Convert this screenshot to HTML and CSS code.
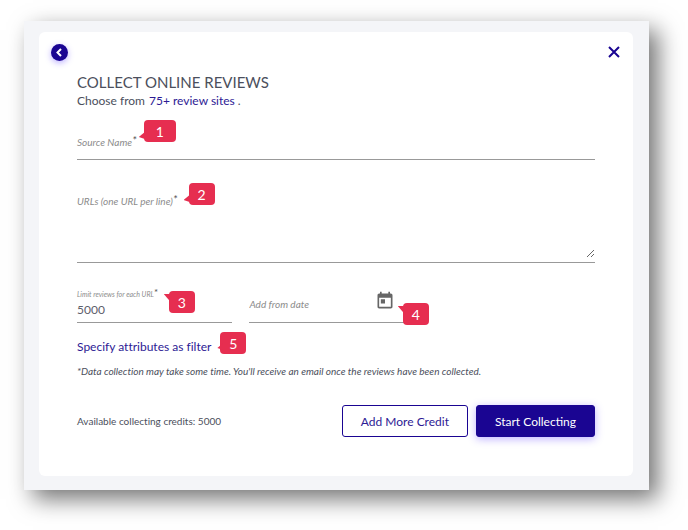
FILE: index.html
```html
<!DOCTYPE html>
<html lang="en">
<head>
    <meta charset="UTF-8">
    <meta name="viewport" content="width=device-width, initial-scale=1.0">
    <title>Collect Online Reviews</title>
    <link rel="stylesheet" href="styles.css">
</head>
<body>
    <div class="frame">
        <main class="card">
            <div class="card-nav">
                <button type="button" class="back-btn" aria-label="Back">
                    <svg width="17" height="17" viewBox="0 0 17 17"><path d="M10 5L6.5 8.5L10 12" fill="none" stroke="#fff" stroke-width="2"></path></svg>
                </button>
                <button type="button" class="close-btn" aria-label="Close">
                    <svg width="12" height="12" viewBox="0 0 12 12"><path d="M1 1L11 11M11 1L1 11" fill="none" stroke="#1a0592" stroke-width="2"></path></svg>
                </button>
            </div>

            <form class="content">
                <h1>COLLECT ONLINE REVIEWS</h1>
                <p class="subtitle">Choose from <a href="#sites">75+ review sites</a> .</p>

                <div class="field field-name">
                    <div class="label-row">
                        <label for="sourceName">Source Name<span class="req">*</span></label>
                        <span class="callout callout-1">1</span>
                    </div>
                    <input type="text" id="sourceName">
                </div>

                <div class="field field-urls">
                    <div class="label-row">
                        <label for="urls">URLs (one URL per line)<span class="req">*</span></label>
                        <span class="callout callout-2">2</span>
                    </div>
                    <textarea id="urls"></textarea>
                </div>

                <div class="field-row">
                    <div class="field field-limit">
                        <div class="label-row">
                            <label for="limit">Limit reviews for each URL<span class="req">*</span></label>
                            <span class="callout callout-3 tail-top">3</span>
                        </div>
                        <input type="text" id="limit" value="5000">
                    </div>
                    <div class="field field-date">
                        <input type="text" placeholder="Add from date" aria-label="Add from date">
                        <button type="button" class="date-btn" aria-label="Open calendar">
                            <svg width="20" height="20" viewBox="0 0 24 24" fill="#666"><path d="M19 3h-1V1h-2v2H8V1H6v2H5c-1.11 0-1.99.9-1.99 2L3 19c0 1.1.89 2 2 2h14c1.1 0 2-.9 2-2V5c0-1.1-.9-2-2-2zm0 16H5V8h14v11zM7 10h5v5H7z"></path></svg>
                        </button>
                        <span class="callout callout-4 tail-top">4</span>
                    </div>
                </div>

                <div class="filter-row">
                    <a href="#filter">Specify attributes as filter</a>
                    <span class="callout callout-5 tail-mid">5</span>
                </div>
                <p class="note">*Data collection may take some time. You'll receive an email once the reviews have been collected.</p>

                <div class="actions">
                    <span class="credits">Available collecting credits: 5000</span>
                    <button type="button" class="btn btn-outline">Add More Credit</button>
                    <button type="submit" class="btn btn-primary">Start Collecting</button>
                </div>
            </form>
        </main>
    </div>
</body>
</html>
```
FILE: styles.css
```css
* {
    box-sizing: border-box;
}
body {
    margin: 0;
    padding: 21px 39px 40px 24px;
    background-color: #fff;
    color: #4b4f5c;
    font-family: 'Lato', sans-serif;
    font-size: 12px;
    font-variant-ligatures: none;
    line-height: 18px;
}
.frame {
    padding: 11px 16px 14px 15px;
    background-color: #f4f5f8;
    box-shadow: 9px 9px 22px rgba(0, 0, 0, 0.55);
}
.card {
    padding: 10px 13px 39px 12px;
    border-radius: 6px;
    background-color: #fff;
}
.card-nav {
    display: flex;
    justify-content: space-between;
    align-items: center;
    height: 20px;
}
.card-nav button,
.date-btn {
    display: flex;
    padding: 0;
    border: none;
    background: none;
    cursor: pointer;
}
.card-nav .back-btn {
    border-radius: 50%;
    background-color: #1a0592;
    box-shadow: 0 2px 6px rgba(90, 60, 255, 0.4);
}
.content {
    padding: 10px 25px 0 26px;
}
h1 {
    margin: 0;
    font-size: 15px;
    font-weight: 400;
    line-height: 20px;
}
p {
    margin: 0;
}
a {
    color: #2d1a94;
    text-decoration: none;
}
.subtitle a {
    margin-left: 1px;
}

/* form fields */
.field {
    border-bottom: 1px solid #999;
}
.label-row {
    position: relative;
    display: flex;
    width: max-content;
}
label {
    color: #8c8c8c;
    font-size: 10px;
    font-style: italic;
}
.req {
    color: #555;
    font-size: 12px;
    line-height: 1;
    vertical-align: 1px;
}
input,
textarea {
    display: block;
    width: 100%;
    padding: 0;
    border: none;
    outline: none;
    background: none;
    color: #5c606b;
    font-family: inherit;
    font-size: 12px;
}
.field-name {
    margin-top: 23px;
}
.field-name input {
    height: 8px;
}
.field-urls {
    margin-top: 32px;
    padding-bottom: 4px;
}
.field-urls textarea {
    height: 48px;
    resize: vertical;
}
.field-row {
    display: grid;
    grid-template-columns: 30% 30%;
    gap: 17px;
    margin-top: 24px;
}
.field-limit label {
    font-size: 7px;
    line-height: 12px;
}
.field-limit .req {
    font-size: 10px;
}
.field-limit input {
    height: 18px;
    margin-bottom: 4px;
}
.field-date {
    position: relative;
    display: flex;
    align-items: center;
    padding-right: 10px;
}
.field-date input {
    min-width: 0;
    padding-bottom: 2px;
}
.field-date input::placeholder {
    color: #8c8c8c;
    font-size: 10px;
    font-style: italic;
}
.date-btn {
    margin-bottom: 8px;
}

/* numbered callouts */
.callout {
    position: absolute;
    width: 26px;
    height: 22px;
    border-radius: 4px;
    background-color: #e62e50;
    color: #fff;
    font-size: 14px;
    line-height: 23px;
    text-align: center;
}
.callout::before {
    content: "";
    position: absolute;
    left: -5px;
    bottom: 3px;
    width: 6px;
    height: 7px;
    background-color: #e62e50;
    clip-path: polygon(0 70%, 100% 0, 100% 100%);
}
.callout.tail-top::before {
    top: 3px;
    clip-path: polygon(0 0, 100% 0, 100% 100%);
}
.callout.tail-mid::before {
    top: 11px;
    left: -3px;
}
.callout-1 {
    left: calc(100% + 7px);
    bottom: 9px;
    width: 32px;
}
.callout-2 {
    left: calc(100% + 11px);
    bottom: 5px;
}
.callout-3 {
    left: calc(100% + 11px);
    top: 4px;
}
.callout-4 {
    right: -24px;
    bottom: -3px;
}
.callout-5 {
    left: calc(100% + 9px);
    top: -6px;
}

.filter-row {
    position: relative;
    width: max-content;
    margin-top: 15px;
}
.note {
    margin-top: 6px;
    font-size: 10px;
    font-style: italic;
}
.actions {
    display: flex;
    align-items: center;
    gap: 8px;
    margin-top: 25px;
}
.credits {
    margin-right: auto;
    font-size: 10px;
}
.btn {
    height: 32px;
    padding: 0 18px;
    border: 1px solid #1a0592;
    border-radius: 3px;
    background-color: #fff;
    color: #2d1a94;
    font-family: inherit;
    font-size: 12px;
    cursor: pointer;
}
.btn-primary {
    background-color: #1a0592;
    color: #fff;
    box-shadow: 0 2px 8px rgba(90, 60, 255, 0.4);
}
```
